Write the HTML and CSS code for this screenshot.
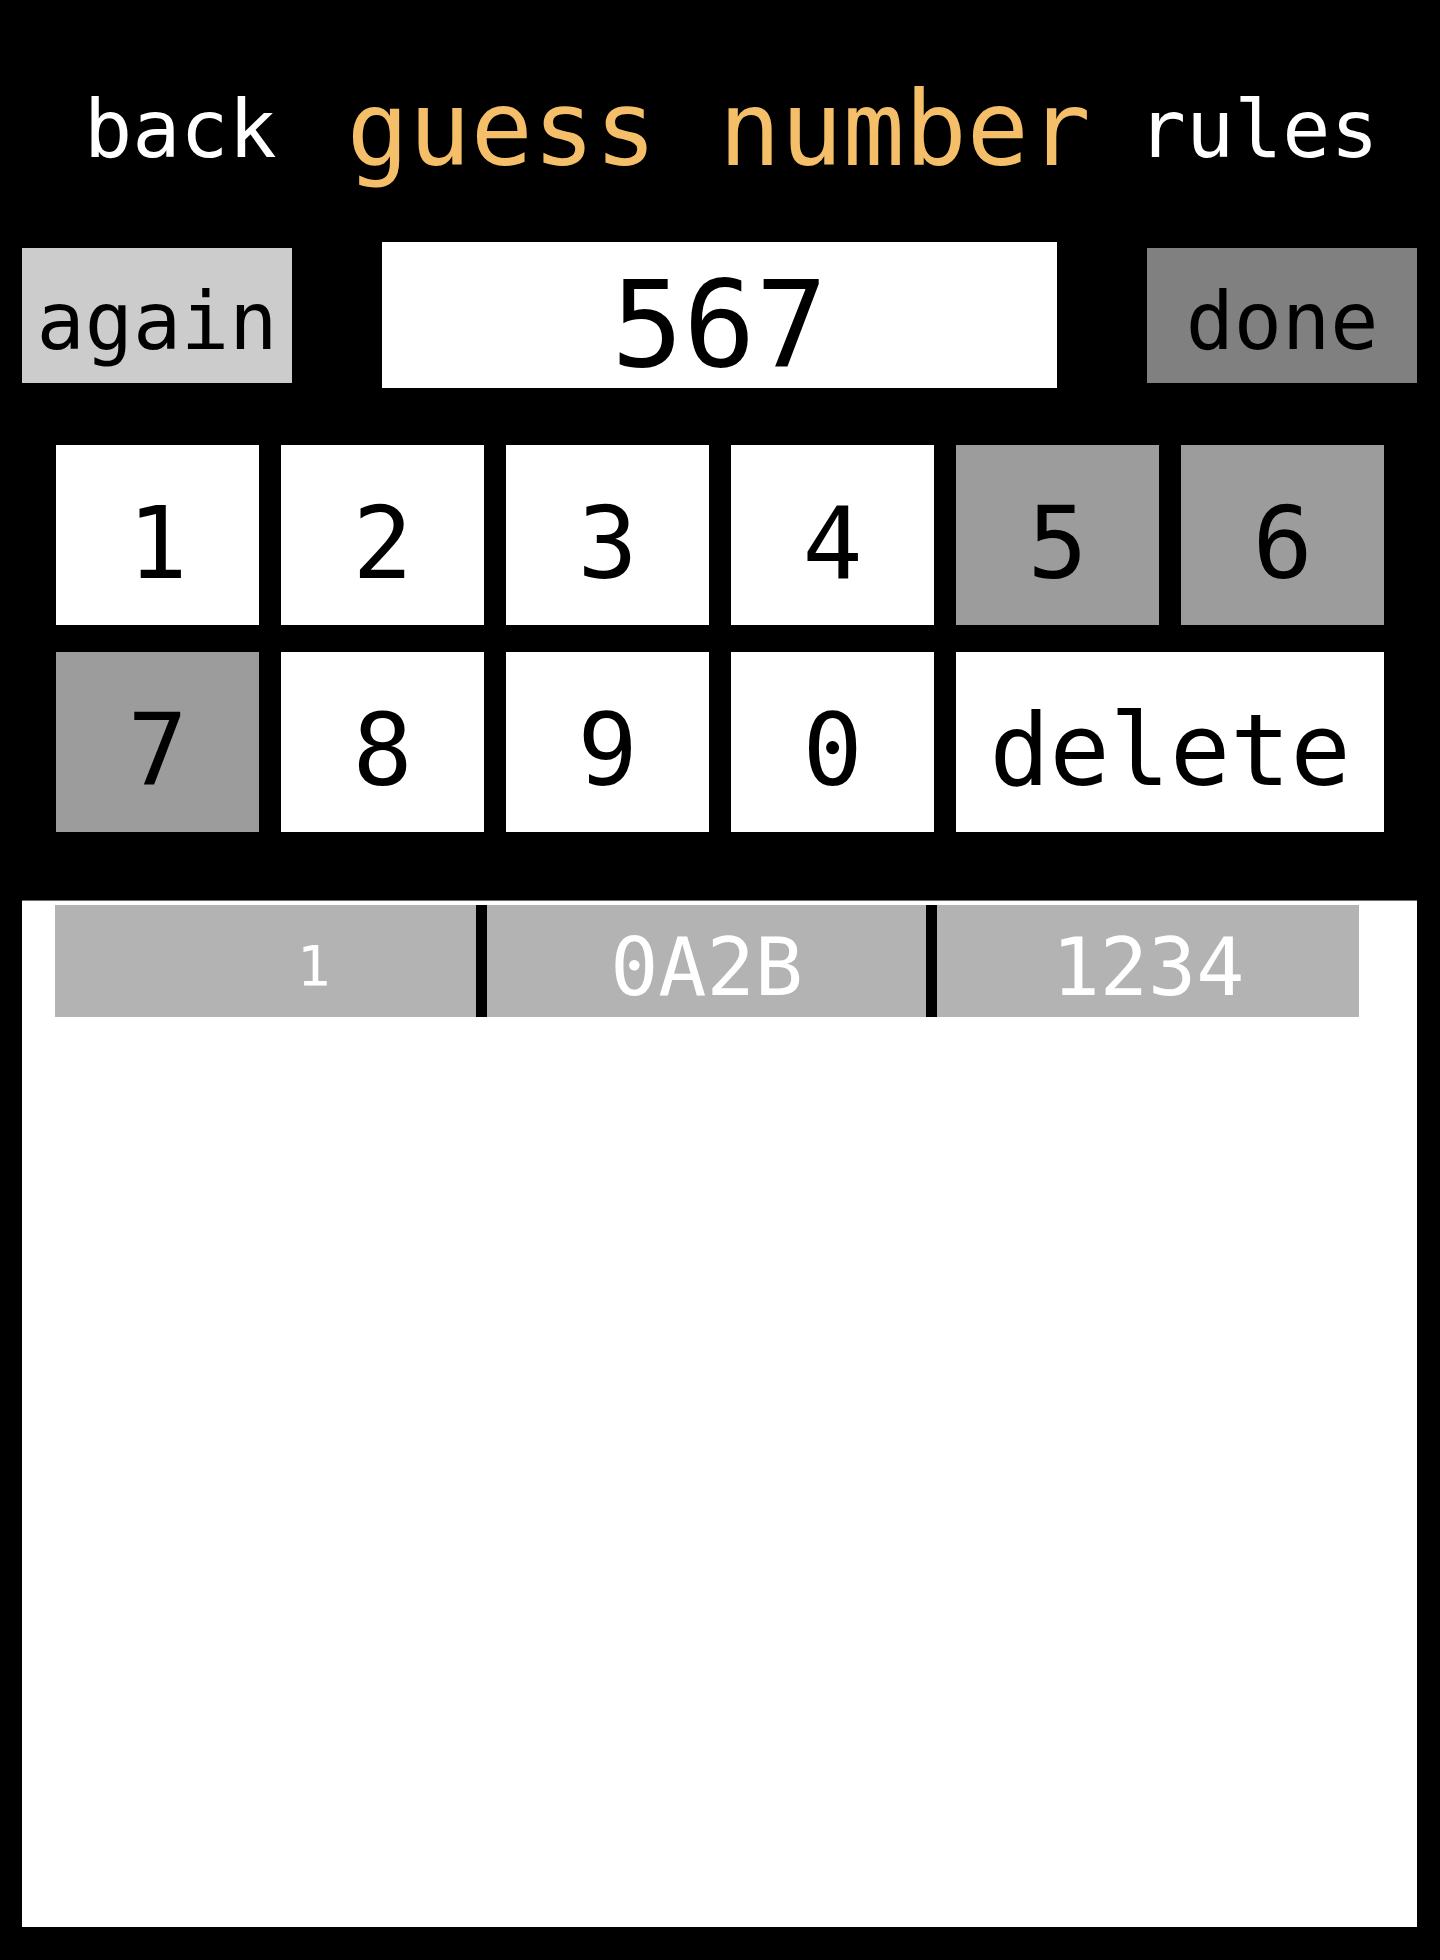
FILE: index.html
```html
<!DOCTYPE html>
<html>
<head>
<meta charset="utf-8">
<title>guess number</title>
<link rel="stylesheet" href="styles.css">
</head>
<body>
<div class="app">
  <header class="topbar">
    <span class="nav">back</span>
    <h1 class="title">guess number</h1>
    <span class="nav">rules</span>
  </header>
  <div class="controls">
    <button class="btn btn-again">again</button>
    <div class="display">567</div>
    <button class="btn btn-done">done</button>
  </div>
  <div class="keypad">
    <button class="key">1</button>
    <button class="key">2</button>
    <button class="key">3</button>
    <button class="key">4</button>
    <button class="key key-used">5</button>
    <button class="key key-used">6</button>
    <button class="key key-used">7</button>
    <button class="key">8</button>
    <button class="key">9</button>
    <button class="key">0</button>
    <button class="key key-wide">delete</button>
  </div>
  <section class="history">
    <div class="history-head">
      <div class="cell cell-index">1</div>
      <div class="cell cell-result">0A2B</div>
      <div class="cell cell-guess">1234</div>
    </div>
  </section>
</div>
</body>
</html>
```
FILE: styles.css
```css
html, body {
  margin: 0;
  padding: 0;
  background: #000;
}
body {
  width: 1440px;
  height: 1960px;
  font-family: "DejaVu Sans Mono", "Liberation Mono", monospace;
  color: #000;
}
.app {
  display: flex;
  flex-direction: column;
}
.topbar {
  display: flex;
  align-items: center;
  height: 116px;
  margin-top: 72px;
  padding-left: 84px;
}
.nav {
  font-size: 80px;
  color: #fff;
  line-height: 1.164;
}
.title {
  margin: 0 47px 0 70px;
  font-size: 103px;
  font-weight: normal;
  color: #f5bf6a;
  line-height: 1.164;
}
.controls {
  display: flex;
  align-items: center;
  gap: 90px;
  margin-top: 54px;
  padding-left: 22px;
}
.btn {
  width: 270px;
  height: 135px;
  border: none;
  padding: 0.16em 0 0;
  margin: 0;
  font-family: inherit;
  font-size: 80px;
  color: #000;
  display: flex;
  align-items: center;
  justify-content: center;
  box-sizing: border-box;
}
.btn-again { background: #cccccc; }
.btn-done { background: #808080; }
.display {
  width: 675px;
  height: 146px;
  background: #fff;
  font-size: 120px;
  display: flex;
  align-items: center;
  justify-content: center;
  padding-top: 0.16em;
  box-sizing: border-box;
}
.keypad {
  display: grid;
  grid-template-columns: repeat(6, 203px);
  grid-auto-rows: 180px;
  column-gap: 22px;
  row-gap: 27px;
  margin-top: 57px;
  padding-left: 56px;
}
.key {
  border: none;
  margin: 0;
  padding: 0.16em 0 0;
  background: #fff;
  font-family: inherit;
  font-size: 100px;
  color: #000;
  display: flex;
  align-items: center;
  justify-content: center;
  box-sizing: border-box;
}
.key-used { background: #9c9c9c; }
.key-wide { grid-column: span 2; }
.history {
  margin: 68px 0 0 22px;
  width: 1395px;
  height: 1027px;
  background: #fff;
  border-top: 1px solid #6e6e6e;
  box-sizing: border-box;
  padding: 4px 0 0 33px;
}
.history-head {
  display: grid;
  grid-template-columns: 421px 450px 433px;
  height: 112px;
}
.cell {
  background: #b3b3b3;
  color: #fff;
  font-size: 80px;
  display: flex;
  align-items: center;
  justify-content: center;
  padding-top: 0.16em;
  box-sizing: border-box;
}
.cell-index {
  font-size: 56px;
  padding-left: 96px;
}
.cell-result, .cell-guess {
  border-left: 11px solid #000;
}
```
